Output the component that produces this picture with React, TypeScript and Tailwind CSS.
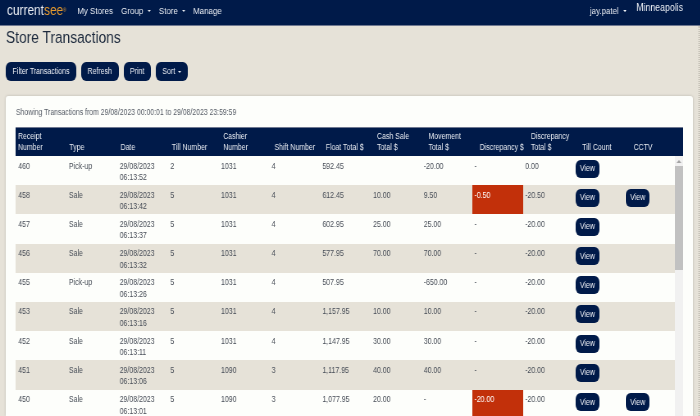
import type { ReactNode } from 'react';

const columns = [
  ['Receipt', 'Number'],
  ['', 'Type'],
  ['', 'Date'],
  ['', 'Till Number'],
  ['Cashier', 'Number'],
  ['', 'Shift Number'],
  ['', 'Float Total $'],
  ['Cash Sale', 'Total $'],
  ['Movement', 'Total $'],
  ['', 'Discrepancy $'],
  ['Discrepancy', 'Total $'],
  ['', 'Till Count'],
  ['', 'CCTV'],
];

type Row = {
  id: string;
  type: string;
  time: string;
  till: string;
  cashier: string;
  shift: string;
  float: string;
  cash: string;
  move: string;
  disc: string;
  total: string;
  cctv?: boolean;
};

const rows: Row[] = [
  { id: '460', type: 'Pick-up', time: '06:13:52', till: '2', cashier: '1031', shift: '4', float: '592.45', cash: '', move: '-20.00', disc: '-', total: '0.00' },
  { id: '458', type: 'Sale', time: '06:13:42', till: '5', cashier: '1031', shift: '4', float: '612.45', cash: '10.00', move: '9.50', disc: '-0.50', total: '-20.50', cctv: true },
  { id: '457', type: 'Sale', time: '06:13:37', till: '5', cashier: '1031', shift: '4', float: '602.95', cash: '25.00', move: '25.00', disc: '-', total: '-20.00' },
  { id: '456', type: 'Sale', time: '06:13:32', till: '5', cashier: '1031', shift: '4', float: '577.95', cash: '70.00', move: '70.00', disc: '-', total: '-20.00' },
  { id: '455', type: 'Pick-up', time: '06:13:26', till: '5', cashier: '1031', shift: '4', float: '507.95', cash: '', move: '-650.00', disc: '-', total: '-20.00' },
  { id: '453', type: 'Sale', time: '06:13:16', till: '5', cashier: '1031', shift: '4', float: '1,157.95', cash: '10.00', move: '10.00', disc: '-', total: '-20.00' },
  { id: '452', type: 'Sale', time: '06:13:11', till: '5', cashier: '1031', shift: '4', float: '1,147.95', cash: '30.00', move: '30.00', disc: '-', total: '-20.00' },
  { id: '451', type: 'Sale', time: '06:13:06', till: '5', cashier: '1090', shift: '3', float: '1,117.95', cash: '40.00', move: '40.00', disc: '-', total: '-20.00' },
  { id: '450', type: 'Sale', time: '06:13:01', till: '5', cashier: '1090', shift: '3', float: '1,077.95', cash: '20.00', move: '-', disc: '-20.00', total: '-20.00', cctv: true },
];

const Caret = () => (
  <span className="ml-[5.5px] inline-block align-middle border-x-[2.5px] border-t-[2.5px] border-x-transparent border-t-current" />
);

const Btn = ({ children }: { children: ReactNode }) => (
  <button className="h-[19px] rounded-[6px] bg-[#001a49] px-[8px] text-[8.5px] text-[#eef1f6]">{children}</button>
);

const ViewBtn = () => (
  <button className="h-[18px] w-[29px] rounded-[6px] bg-[#001a49] text-[8.5px] leading-[17px] text-[#f2f4f8]">View</button>
);

const Cell = ({ children }: { children?: ReactNode }) => (
  <div className="min-w-0 px-[2.8px] pt-[4.5px] leading-[11.5px]">{children}</div>
);

// the reference is a wider page squeezed sideways, so the page is laid out at 854px and narrowed to 700
export default function App() {
  return (
    <div className="h-[416px] w-[700px] overflow-hidden">
      <div className="flex h-[416px] w-[854px] origin-left scale-x-[0.82] flex-col bg-[#e6e2d8] font-['Liberation_Sans',Arial,sans-serif] text-[#474d57] will-change-transform">
        <header className="flex h-[26px] shrink-0 items-start justify-between border-b border-[#6f7890] bg-[#001a49] pl-[8.5px] pr-[21px] text-[#e8ecf2]">
          <nav className="flex items-center pt-[3px] text-[9.7px] leading-[13px]">
            <span className="mr-[13.5px] text-[14.5px] leading-[14px]">
              current<span className="text-[#e59a2e]">see</span>
              <span className="align-top text-[5px] text-[#e59a2e]">®</span>
            </span>
            <span className="mr-[10px]">My Stores</span>
            <span className="mr-[9.5px]">Group<Caret /></span>
            <span className="mr-[9px]">Store<Caret /></span>
            <span>Manage</span>
          </nav>
          <div className="flex items-start">
            <span className="mr-[12px] pt-[4px] text-[9.6px] leading-[13px]">jay.patel<Caret /></span>
            <span className="pt-[1px] text-[10.7px] leading-[13px]">Minneapolis</span>
          </div>
        </header>

        <main className="mr-[1px] flex min-h-0 flex-1 flex-col border-r border-dotted border-[#a8a498] pl-[7.3px] pr-[7px]">
          <h1 className="pt-[2px] text-[16.8px] leading-[20px] text-[#1d2a3d]">Store Transactions</h1>
          <div className="mt-[14px] flex gap-[6px]">
            <Btn>Filter Transactions</Btn>
            <Btn>Refresh</Btn>
            <Btn>Print</Btn>
            <Btn>Sort<span className="ml-[3px] inline-block align-middle border-x-[2.5px] border-t-[2.5px] border-x-transparent border-t-current" /></Btn>
          </div>

          <section className="mt-[15px] min-h-0 flex-1 rounded-t-[3px] bg-[#fdfefb] px-[12.2px] pt-[11px] shadow-[0_0_3px_rgba(0,0,0,0.2)]">
            <p className="text-[8.4px] leading-[11px] text-[#565c66]">Showing Transactions from 29/08/2023 00:00:01 to 29/08/2023 23:59:59</p>

            <div className="mt-[9px] grid h-[29px] grid-cols-[repeat(13,minmax(0,1fr))] border-t border-[#6f7890] bg-[#001a49] text-[8.5px] leading-[11.3px] text-[#e8ecf2]">
              {columns.map(([top, bottom]) => (
                <div key={bottom + top} className="whitespace-nowrap px-[2.4px] pt-[3px]">
                  <div className="h-[11.3px]">{top}</div>
                  <div>{bottom}</div>
                </div>
              ))}
            </div>

            <div className="flex">
              <div className="min-w-0 flex-1 text-[8.5px]">
                {rows.map((r, i) => (
                  <div key={r.id} className={`grid h-[29.2px] grid-cols-[repeat(13,minmax(0,1fr))] ${i % 2 ? 'bg-[#e6e2d8]' : 'bg-[#fdfefb]'}`}>
                    <Cell>{r.id}</Cell>
                    <Cell>{r.type}</Cell>
                    <Cell>29/08/2023<br />{r.time}</Cell>
                    <Cell>{r.till}</Cell>
                    <Cell>{r.cashier}</Cell>
                    <Cell>{r.shift}</Cell>
                    <Cell>{r.float}</Cell>
                    <Cell>{r.cash}</Cell>
                    <Cell>{r.move}</Cell>
                    {r.disc === '-' ? <Cell>-</Cell> : (
                      <div className="bg-[#c2300a] px-[2.8px] pt-[4.5px] leading-[11.5px] text-white">{r.disc}</div>
                    )}
                    <Cell>{r.total}</Cell>
                    <div className="pl-[2.4px] pt-[3.5px]"><ViewBtn /></div>
                    <div className="pl-[2px] pt-[3.5px]">{r.cctv && <ViewBtn />}</div>
                  </div>
                ))}
              </div>
              <div className="w-[9.8px] shrink-0 bg-[#f1f1f1]">
                <div className="flex h-[10px] items-center justify-center">
                  <span className="border-x-[3px] border-b-[3px] border-x-transparent border-b-[#a3a3a3]" />
                </div>
                <div className="h-[104px] bg-[#c1c1c1]" />
              </div>
            </div>
          </section>
        </main>
      </div>
    </div>
  );
}
